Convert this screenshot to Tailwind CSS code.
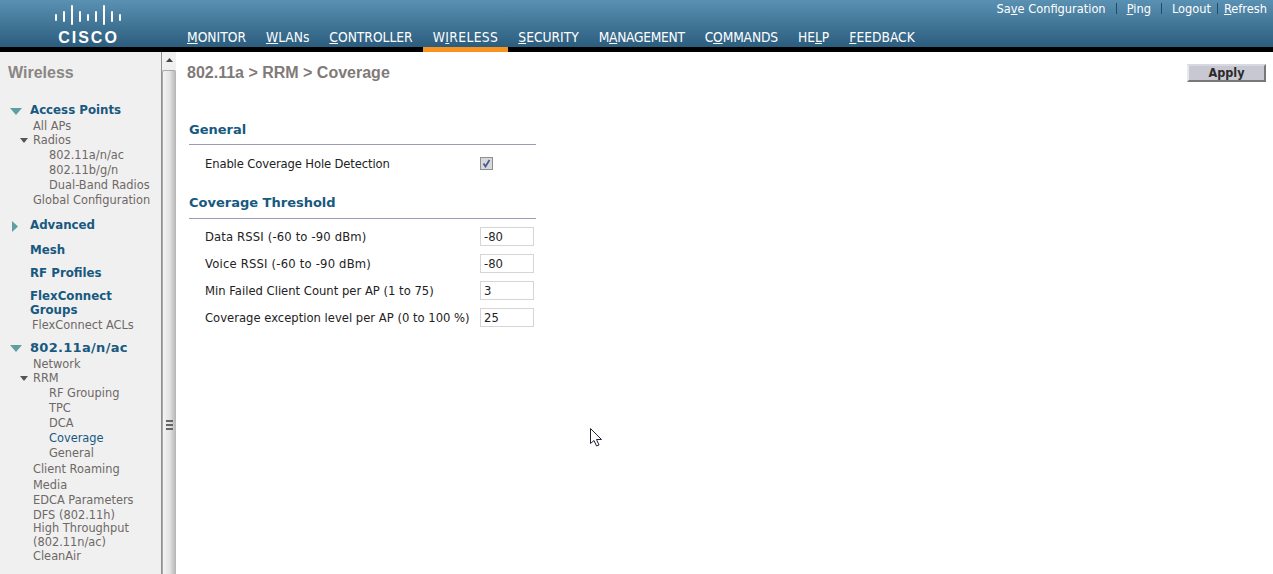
<!DOCTYPE html>
<html lang="en">
<head>
    <meta charset="UTF-8">
    <title>802.11a RRM Coverage</title>
    <script src="https://cdn.jsdelivr.net/npm/@tailwindcss/browser@4"></script>
</head>
<body class="relative h-[574px] overflow-hidden bg-white font-['DejaVu_Sans',sans-serif] text-[11.6px]">
    <!-- Top bar -->
    <header class="flex h-[52px] border-b-[5px] border-black bg-linear-to-b from-[#5a91b2] to-[#2b5d7e]">
        <div class="w-[187px] shrink-0 pr-[12px] pt-[5px]">
            <div class="flex flex-col items-center">
                <svg width="68" height="21" viewBox="0 0 68 21" class="text-white" stroke="currentColor" stroke-width="2" stroke-linecap="round">
                    <path d="M2 10v5M10 7v9M18 1v18M26 7v9M34 10v5M42 7v9M50 1v18M58 7v9M66 10v5"/>
                </svg>
                <span class="mt-[3px] pl-[2px] font-['Liberation_Sans',sans-serif] text-[16px] leading-[18px] font-bold tracking-[2px] text-white">CISCO</span>
            </div>
        </div>
        <div class="relative flex-1 font-['DejaVu_Sans_Condensed','DejaVu_Sans',sans-serif] text-white">
            <div class="absolute top-[1px] right-[6px] flex items-center text-[12.7px] leading-[15px]">
                <a>Sa<u>v</u>e Configuration</a>
                <span class="mx-[10px] h-[11px] w-px bg-[#1f4a68]"></span>
                <a><u>P</u>ing</a>
                <span class="mx-[10px] h-[11px] w-px bg-[#1f4a68]"></span>
                <a>Lo<u>g</u>out</a>
                <span class="mx-[6px] h-[11px] w-px bg-[#1f4a68]"></span>
                <a><u>R</u>efresh</a>
            </div>
            <nav class="absolute bottom-0 left-0 flex h-[20px] text-[13.7px] leading-[20px]">
                <a class="mr-[20px]"><u>M</u>ONITOR</a>
                <a class="mr-[20px]"><u>W</u>LANs</a>
                <a class="mr-[20px]"><u>C</u>ONTROLLER</a>
                <a class="mr-[10px] -ml-[10px] -mb-[5px] h-[25px] border-b-[5px] border-[#f7931e] px-[10px] tracking-[0.4px]">W<u>I</u>RELESS</a>
                <a class="mr-[20px]"><u>S</u>ECURITY</a>
                <a class="mr-[20px] tracking-[-0.3px]">M<u>A</u>NAGEMENT</a>
                <a class="mr-[20px] tracking-[-0.15px]">C<u>O</u>MMANDS</a>
                <a class="mr-[20px]">HE<u>L</u>P</a>
                <a><u>F</u>EEDBACK</a>
            </nav>
        </div>
    </header>

    <div class="flex h-[522px]">
        <!-- Left menu -->
        <aside class="w-[162px] shrink-0 overflow-hidden border-r border-[#8f8f8f] bg-[#f0f0f0] pt-[13px] text-[11.4px] text-[#6e6866]">
            <h2 class="h-[16px] pl-[8px] font-['Liberation_Sans',sans-serif] text-[16px] leading-[16px] font-bold text-[#8a8582]">Wireless</h2>

            <div class="mt-[22px] flex h-[16px] items-center pl-[10px] text-[11.8px] font-bold text-[#17597f]">
                <svg width="12" height="7" viewBox="0 0 12 7" class="mr-[8px]"><path d="M0 0h12L6 7z" fill="#5f9ea3"/></svg>Access Points
            </div>
            <div class="h-[14px] pl-[33px] leading-[14px]">All APs</div>
            <div class="flex h-[14px] items-center pl-[20px] leading-[14px]">
                <svg width="8" height="5" viewBox="0 0 8 5" class="mr-[5px]"><path d="M0 0h8L4 5z" fill="#555"/></svg>Radios
            </div>
            <ul class="mt-[1px] space-y-[1px] pl-[49px] leading-[14px]">
                <li>802.11a/n/ac</li>
                <li>802.11b/g/n</li>
                <li>Dual-Band Radios</li>
            </ul>
            <div class="mt-[1px] h-[14px] pl-[33px] leading-[14px]">Global Configuration</div>

            <div class="mt-[11px] flex h-[16px] items-center pl-[12px] text-[11.8px] font-bold text-[#17597f]">
                <svg width="6" height="11" viewBox="0 0 6 11" class="mr-[12px]"><path d="M0 0l6 5.500L0 11z" fill="#5f9ea3"/></svg>Advanced
            </div>
            <div class="mt-[8px] h-[16px] pl-[30px] text-[11.8px] leading-[16px] font-bold text-[#17597f]">Mesh</div>
            <div class="mt-[7px] h-[16px] pl-[30px] text-[11.8px] leading-[16px] font-bold text-[#17597f]">RF Profiles</div>
            <div class="mt-[8px] pl-[30px] text-[11.8px] leading-[14px] font-bold text-[#17597f]">FlexConnect<br>Groups</div>
            <div class="mt-[1px] h-[14px] pl-[32px] leading-[14px]">FlexConnect ACLs</div>

            <div class="mt-[8px] flex h-[16px] items-center pl-[10px] text-[13px] font-bold tracking-[0.3px] text-[#17597f]">
                <svg width="12" height="7" viewBox="0 0 12 7" class="mr-[8px]"><path d="M0 0h12L6 7z" fill="#5f9ea3"/></svg>802.11a/n/ac
            </div>
            <div class="mt-[1px] h-[14px] pl-[33px] leading-[14px]">Network</div>
            <div class="flex h-[14px] items-center pl-[20px] leading-[14px]">
                <svg width="8" height="5" viewBox="0 0 8 5" class="mr-[5px]"><path d="M0 0h8L4 5z" fill="#555"/></svg>RRM
            </div>
            <ul class="mt-[1px] space-y-[1px] pl-[49px] leading-[14px]">
                <li>RF Grouping</li>
                <li>TPC</li>
                <li>DCA</li>
                <li class="text-[#17597f]">Coverage</li>
                <li>General</li>
            </ul>
            <ul class="mt-[2px] pl-[33px] leading-[14px]">
                <li>Client Roaming</li>
                <li class="mt-[2px]">Media</li>
                <li class="mt-[1px]">EDCA Parameters</li>
                <li class="mt-[1px]">DFS (802.11h)</li>
                <li class="-mt-[1px]">High Throughput<br>(802.11n/ac)</li>
                <li>CleanAir</li>
            </ul>
            <div class="mt-[9px] flex h-[16px] items-center pl-[30px] text-[13px] font-bold tracking-[0.3px] text-[#17597f]">802.11b/g/n</div>
        </aside>

        <!-- Splitter -->
        <div class="flex w-[14px] shrink-0 flex-col bg-[#f0f0f0]">
            <div class="flex h-[18px] shrink-0 justify-center pt-[6px]">
                <svg width="7" height="4" viewBox="0 0 7 4"><path d="M0 4l3.500-4L7 4z" fill="#444"/></svg>
            </div>
            <div class="flex flex-1 flex-col items-center rounded-t-[2px] border-t border-l border-[#a8a8a8] bg-linear-to-r from-[#f4f4f4] via-[#e4e4e4] to-[#b4b4b4] pt-[349px]">
                <div class="space-y-[2px]">
                    <div class="h-[2px] w-[7px] bg-[#666]"></div>
                    <div class="h-[2px] w-[7px] bg-[#666]"></div>
                    <div class="h-[2px] w-[7px] bg-[#666]"></div>
                </div>
            </div>
        </div>

        <!-- Content -->
        <main class="flex-1 pt-[12px] text-[#222]">
            <div class="flex items-start justify-between pr-[7px] pl-[11px]">
                <h1 class="font-['Liberation_Sans',sans-serif] text-[16px] leading-[18px] font-bold text-[#807a78]">802.11a &gt; RRM &gt; Coverage</h1>
                <button class="h-[18px] w-[79px] border-2 border-t-[#d8d8e0] border-r-[#777] border-b-[#777] border-l-[#e8e8ee] bg-[#c8c8d2] font-['DejaVu_Sans_Condensed','DejaVu_Sans',sans-serif] text-[12.5px] leading-[14px] font-bold text-[#2a2a2a]">Apply</button>
            </div>

            <section class="mt-[40px] ml-[13px] w-[347px]">
                <h3 class="border-b border-[#9a9cb5] pb-[6px] text-[13px] leading-[16px] font-bold text-[#17597f]">General</h3>
                <div class="mt-[11px] flex h-[14px] items-center pl-[16px]">
                    <span class="w-[275px] pt-[4px] tracking-[-0.13px]">Enable Coverage Hole Detection</span>
                    <span class="flex h-[13px] w-[13px] items-center justify-center border border-[#8e8f8f] bg-[#d8d8d8]">
                        <svg width="9" height="9" viewBox="0 0 9 9"><path d="M1.500 4.500l2 3 4-6.500" fill="none" stroke="#4a5a9a" stroke-width="1.800"/></svg>
                    </span>
                </div>
            </section>

            <section class="mt-[25px] ml-[13px] w-[347px]">
                <h3 class="border-b border-[#9a9cb5] pb-[7px] text-[13px] leading-[16px] font-bold text-[#17597f]">Coverage Threshold</h3>
                <div class="mt-[8px] space-y-[8px] pl-[16px]">
                    <div class="flex h-[19px] items-center"><span class="w-[275px] pt-[2px] tracking-[0.15px]">Data RSSI (-60 to -90 dBm)</span><input value="-80" class="h-[19px] w-[54px] border border-[#d5d5d5] bg-white px-[3px]"></div>
                    <div class="flex h-[19px] items-center"><span class="w-[275px] pt-[2px] tracking-[0.2px]">Voice RSSI (-60 to -90 dBm)</span><input value="-80" class="h-[19px] w-[54px] border border-[#d5d5d5] bg-white px-[3px]"></div>
                    <div class="flex h-[19px] items-center"><span class="w-[275px] pt-[2px]">Min Failed Client Count per AP (1 to 75)</span><input value="3" class="h-[19px] w-[54px] border border-[#d5d5d5] bg-white px-[3px]"></div>
                    <div class="flex h-[19px] items-center"><span class="w-[275px] whitespace-nowrap pt-[2px]">Coverage exception level per AP (0 to 100 %)</span><input value="25" class="h-[19px] w-[54px] border border-[#d5d5d5] bg-white px-[3px]"></div>
                </div>
            </section>
        </main>
    </div>

    <!-- Mouse pointer caught in the screenshot -->
    <svg width="13" height="19" viewBox="0 0 13 19" class="absolute top-[428px] left-[590px]">
        <path d="M.500.500v15l3.500-3 2.500 5.500 2.500-1-2.500-5.500h5z" fill="#fff" stroke="#23233a"/>
    </svg>
</body>
</html>
